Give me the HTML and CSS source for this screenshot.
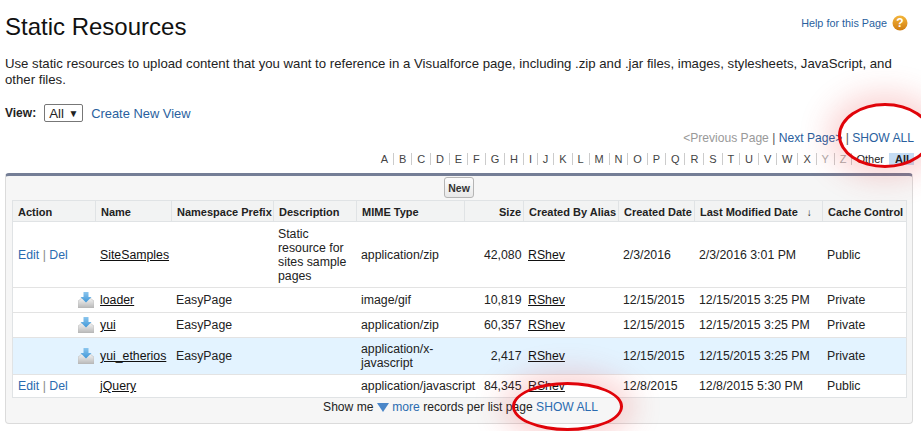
FILE: index.html

```html
<!DOCTYPE html>
<html lang="en">
<head>
  <meta charset="UTF-8" />
  <title>Static Resources</title>
  <link rel="stylesheet" href="styles.css">
</head>
<body>
  <div class="page">
    <div class="title-row">
      <h1>Static Resources</h1>
      <div class="help">
        <a href="#">Help for this Page</a>
        <svg class="help-icon" width="16" height="16" viewBox="0 0 16 16">
          <defs>
            <linearGradient id="gold" x1="0" y1="0" x2="0" y2="1"><stop offset="0" stop-color="#f4b63c"/><stop offset="1" stop-color="#d07c10"/></linearGradient>
          </defs>
          <circle cx="8" cy="8" r="7.5" fill="url(#gold)"/>
          <text x="8" y="12" text-anchor="middle" class="help-mark">?</text>
        </svg>
      </div>
    </div>

    <p class="intro">Use static resources to upload content that you want to reference in a Visualforce page, including .zip and .jar files, images, stylesheets, JavaScript, and other files.</p>

    <div class="view-row">
      <b>View:</b>
      <span class="select">All <i>▼</i></span>
      <a href="#">Create New View</a>
    </div>

    <div class="pager"><span class="off">&lt;Previous Page</span> | <a href="#">Next Page&gt;</a> | <a href="#">SHOW ALL</a></div>

    <div class="letters">
      <span>A</span><span>B</span><span>C</span><span>D</span><span>E</span><span>F</span><span>G</span><span>H</span><span>I</span><span>J</span><span>K</span><span>L</span><span>M</span><span>N</span><span>O</span><span>P</span><span>Q</span><span>R</span><span>S</span><span>T</span><span>U</span><span>V</span><span>W</span><span>X</span><span class="off">Y</span><span class="off">Z</span><span class="other">Other</span><span class="all">All</span>
    </div>

    <div class="box">
      <div class="box-top"><button class="btn">New</button></div>
      <table>
        <colgroup>
          <col class="c1"><col class="c2"><col class="c3"><col class="c4"><col class="c5"><col class="c6"><col class="c7"><col class="c8"><col class="c9"><col class="c10">
        </colgroup>
        <thead>
          <tr>
            <th>Action</th><th>Name</th><th>Namespace Prefix</th><th>Description</th><th>MIME Type</th><th class="num">Size</th><th>Created By Alias</th><th>Created Date</th><th>Last Modified Date <span class="sort">↓</span></th><th>Cache Control</th>
          </tr>
        </thead>
        <tbody>
          <tr class="r1">
            <td class="act"><a href="#">Edit</a> <em>|</em> <a href="#">Del</a></td>
            <td><a class="dark" href="#">SiteSamples</a></td>
            <td></td>
            <td>Static resource for sites sample pages</td>
            <td>application/zip</td>
            <td class="num">42,080</td>
            <td><a class="dark" href="#">RShev</a></td>
            <td>2/3/2016</td>
            <td>2/3/2016 3:01 PM</td>
            <td>Public</td>
          </tr>
          <tr class="r2">
            <td class="ico"><svg width="16" height="16" viewBox="0 0 16 16"><use href="#dl"/></svg></td>
            <td><a class="dark" href="#">loader</a></td>
            <td>EasyPage</td>
            <td></td>
            <td>image/gif</td>
            <td class="num">10,819</td>
            <td><a class="dark" href="#">RShev</a></td>
            <td>12/15/2015</td>
            <td>12/15/2015 3:25 PM</td>
            <td>Private</td>
          </tr>
          <tr class="r2">
            <td class="ico"><svg width="16" height="16" viewBox="0 0 16 16"><use href="#dl"/></svg></td>
            <td><a class="dark" href="#">yui</a></td>
            <td>EasyPage</td>
            <td></td>
            <td>application/zip</td>
            <td class="num">60,357</td>
            <td><a class="dark" href="#">RShev</a></td>
            <td>12/15/2015</td>
            <td>12/15/2015 3:25 PM</td>
            <td>Private</td>
          </tr>
          <tr class="r4">
            <td class="ico"><svg width="16" height="16" viewBox="0 0 16 16"><use href="#dl"/></svg></td>
            <td><a class="dark" href="#">yui_etherios</a></td>
            <td>EasyPage</td>
            <td></td>
            <td>application/x-javascript</td>
            <td class="num">2,417</td>
            <td><a class="dark" href="#">RShev</a></td>
            <td>12/15/2015</td>
            <td>12/15/2015 3:25 PM</td>
            <td>Private</td>
          </tr>
          <tr class="r5">
            <td class="act"><a href="#">Edit</a> <em>|</em> <a href="#">Del</a></td>
            <td><a class="dark" href="#">jQuery</a></td>
            <td></td>
            <td></td>
            <td class="nowrap">application/javascript</td>
            <td class="num">84,345</td>
            <td><a class="dark" href="#">RShev</a></td>
            <td>12/8/2015</td>
            <td>12/8/2015 5:30 PM</td>
            <td>Public</td>
          </tr>
        </tbody>
      </table>
      <div class="more">
        Show me
        <svg width="12" height="9" viewBox="0 0 12 9"><path d="M0 0H12L6 9Z" fill="#4a86c8"/></svg>
        <a href="#">more</a> records per list page <a href="#">SHOW ALL</a>
      </div>
    </div>
  </div>

  <svg class="defs" width="0" height="0">
    <defs>
      <linearGradient id="tray" x1="0" y1="0" x2="0" y2="1"><stop offset="0" stop-color="#f4f4f4"/><stop offset="1" stop-color="#b8b8b8"/></linearGradient>
      <linearGradient id="arr" x1="0" y1="0" x2="0" y2="1"><stop offset="0" stop-color="#8cc6ee"/><stop offset="1" stop-color="#3f97d8"/></linearGradient>
      <g id="dl">
        <path d="M0 9L4 6H12L16 9V16H0Z" fill="url(#tray)" stroke="#b5b5b5" stroke-width=".5"/>
        <path d="M5.5 0H10.5V5H13.5L8 10.5L2.5 5H5.5Z" fill="url(#arr)"/>
      </g>
    </defs>
  </svg>

  <div class="ring ring-top"></div>
  <div class="ring ring-bottom"></div>
</body>
</html>
```

FILE: styles.css

```css
html, body { margin: 0; padding: 0; height: 431px; overflow: hidden; }
body { font-family: "Liberation Sans", Arial, sans-serif; font-size: 12px; color: #222; background: #fff; position: relative; }
a { color: #2a5f9e; text-decoration: none; }
.page { padding: 0 7px 0 5px; }

.title-row { display: flex; justify-content: space-between; align-items: flex-start; height: 56px; }
h1 { margin: 12px 0 0; font-size: 24px; line-height: 29px; font-weight: normal; color: #111; }
.help { display: flex; align-items: center; gap: 5px; margin: 15px 6px 0 0; font-size: 10.8px; }
.help-mark { font: bold 12px "Liberation Sans", Arial, sans-serif; fill: #fff; }

.intro { margin: 0; font-size: 13.2px; line-height: 16px; color: #222; width: 900px; }

.view-row { display: flex; align-items: center; margin-top: 15px; height: 20px; font-size: 12px; }
.view-row a { margin-left: 8px; font-size: 12.9px; }
.select { display: inline-block; width: 39px; height: 18px; margin-left: 8px; box-sizing: border-box; border: 1px solid #777; border-radius: 2px; font-size: 13.3px; line-height: 17px; padding-left: 4px; }
.select i { font-style: normal; font-size: 10px; margin-left: 1px; position: relative; top: -1px; }

.pager { margin-top: 8px; text-align: right; font-size: 12.1px; line-height: 14px; color: #555; }
.pager .off { color: #999; }

.letters { display: flex; justify-content: flex-end; margin-top: 8px; height: 12px; font-size: 11px; line-height: 12px; color: #444; }
.letters span { padding: 0 4.95px; border-right: 1px solid #ccc; }
.letters .off { color: #aaa; }
.letters .other { color: #222; border-right: 0; padding: 0 5px 0 4px; }
.letters .all { box-sizing: border-box; width: 25px; background: #c5dcf4; font-weight: bold; border-right: 0; padding: 0 0 0 6px; color: #222; }

.box { margin-top: 8px; width: 908px; height: 251px; box-sizing: border-box; background: #f6f6f6; border: 1px solid #dbdbdb; border-top: 3px solid #747e96; border-radius: 4px; padding: 0 6px; }
.box-top { display: flex; justify-content: center; align-items: flex-start; height: 23px; padding-top: 1px; }
.btn { height: 21px; width: 30px; padding: 0; font: bold 10.5px "Liberation Sans", Arial, sans-serif; color: #333; background: linear-gradient(#fdfdfd, #e8e8e8); border: 1px solid #b5b5b5; border-radius: 3px; }

table { border-collapse: collapse; table-layout: fixed; width: 894px; background: #fff; border: 1px solid #e0e3e5; }
.c1 { width: 83px; } .c2 { width: 76px; } .c3 { width: 102px; } .c4 { width: 83px; } .c5 { width: 108px; }
.c6 { width: 59px; } .c7 { width: 95px; } .c8 { width: 76px; } .c9 { width: 128px; } .c10 { width: 84px; }
th { height: 18px; padding: 2px 5px 0; text-align: left; font-size: 11px; font-weight: bold; color: #222; background: #f2f3f3; border: 1px solid #e0e3e5; white-space: nowrap; overflow: hidden; }
.sort { margin-left: 6px; font-weight: normal; font-size: 10px; }
td { padding: 0 4px 0 4.5px; font-size: 12.3px; line-height: 14px; color: #222; border-bottom: 1px solid #e3e3e3; vertical-align: middle; }
.num { text-align: right; padding-right: 2px; }
th.num { padding-right: 2px; }
.nowrap { white-space: nowrap; }
.r1 td { height: 65px; }
.r2 td { height: 24px; }
.r4 td { height: 36px; background: #e3f3ff; }
.r5 td { height: 22px; border-bottom: 0; }
td.act { padding-left: 5px; }
.act a { color: #2a6bb0; }
.act em { font-style: normal; color: #888; }
.ico { padding-right: 2px; }
.ico svg { display: block; margin-left: auto; }
.dark { color: #111; text-decoration: underline; }

.more { text-align: center; line-height: 19px; padding-left: 3px; font-size: 12.1px; color: #222; }
.more a { color: #2a6bb0; }
.more svg { vertical-align: -1px; }

.defs { position: absolute; }
.ring { position: absolute; box-sizing: border-box; border: 3px solid #e0040a; border-radius: 50%; box-shadow: 0 0 30px 10px rgba(230, 60, 60, .22); }
.ring-top { left: 838px; top: 103px; width: 94px; height: 65px; }
.ring-bottom { left: 512px; top: 382px; width: 111px; height: 49px; }
```
